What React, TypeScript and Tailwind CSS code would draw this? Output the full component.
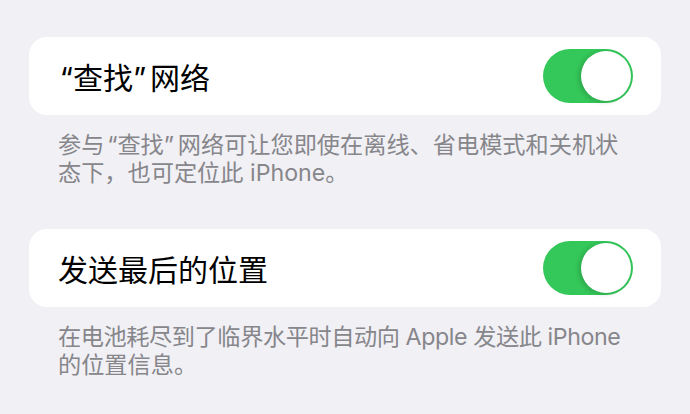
import React from "react";

function Toggle() {
  return (
    <div className="relative w-[90px] h-[54px] rounded-full bg-[#34c759] shrink-0">
      <div className="absolute right-[2px] top-[2px] w-[50px] h-[50px] rounded-full bg-white shadow-[-2px_1px_5px_rgba(0,0,0,0.18)]" />
    </div>
  );
}

// curly quotes in the screenshot are about half an em wide
function Q({ open, w }: { open: boolean; w: string }) {
  return (
    <span className={`inline-block ${w} ${open ? "text-right" : "text-left"}`}>
      {open ? "“" : "”"}
    </span>
  );
}

function Section({ title, lines }: { title: React.ReactNode; lines: React.ReactNode[] }) {
  return (
    <div>
      <div className="h-[78px] rounded-[18px] bg-white flex items-center justify-between pl-[29px] pr-[28px]">
        <span className="text-[30px] leading-none text-black pt-[3px]">{title}</span>
        <Toggle />
      </div>
      <div className="pt-[16px] pl-[29px] text-[23.2px] leading-[28px] text-[#86868b]">
        {lines.map((l, i) => (
          <div key={i} className="whitespace-nowrap">{l}</div>
        ))}
      </div>
    </div>
  );
}

export default function App() {
  return (
    <div
      className="w-[690px] h-[414px] bg-[#f1f0f5] px-[29px] pt-[37px] flex flex-col gap-[42px] overflow-hidden"
      style={{ fontFamily: 'Inter, "Noto Sans CJK SC", sans-serif' }}
    >
      <Section
        title={
          <>
            <Q open w="w-[15px]" />查找<Q open={false} w="w-[17px]" />网络
          </>
        }
        lines={[
          <>
            参与<Q open w="w-[13px]" />查找<Q open={false} w="w-[14px]" />网络可让您即使在离线、省电模式和关机状
          </>,
          "态下，也可定位此 iPhone。",
        ]}
      />
      <Section
        title="发送最后的位置"
        lines={[
          <span className="tracking-[-0.42px]">在电池耗尽到了临界水平时自动向 Apple 发送此 iPhone</span>,
          "的位置信息。",
        ]}
      />
    </div>
  );
}
